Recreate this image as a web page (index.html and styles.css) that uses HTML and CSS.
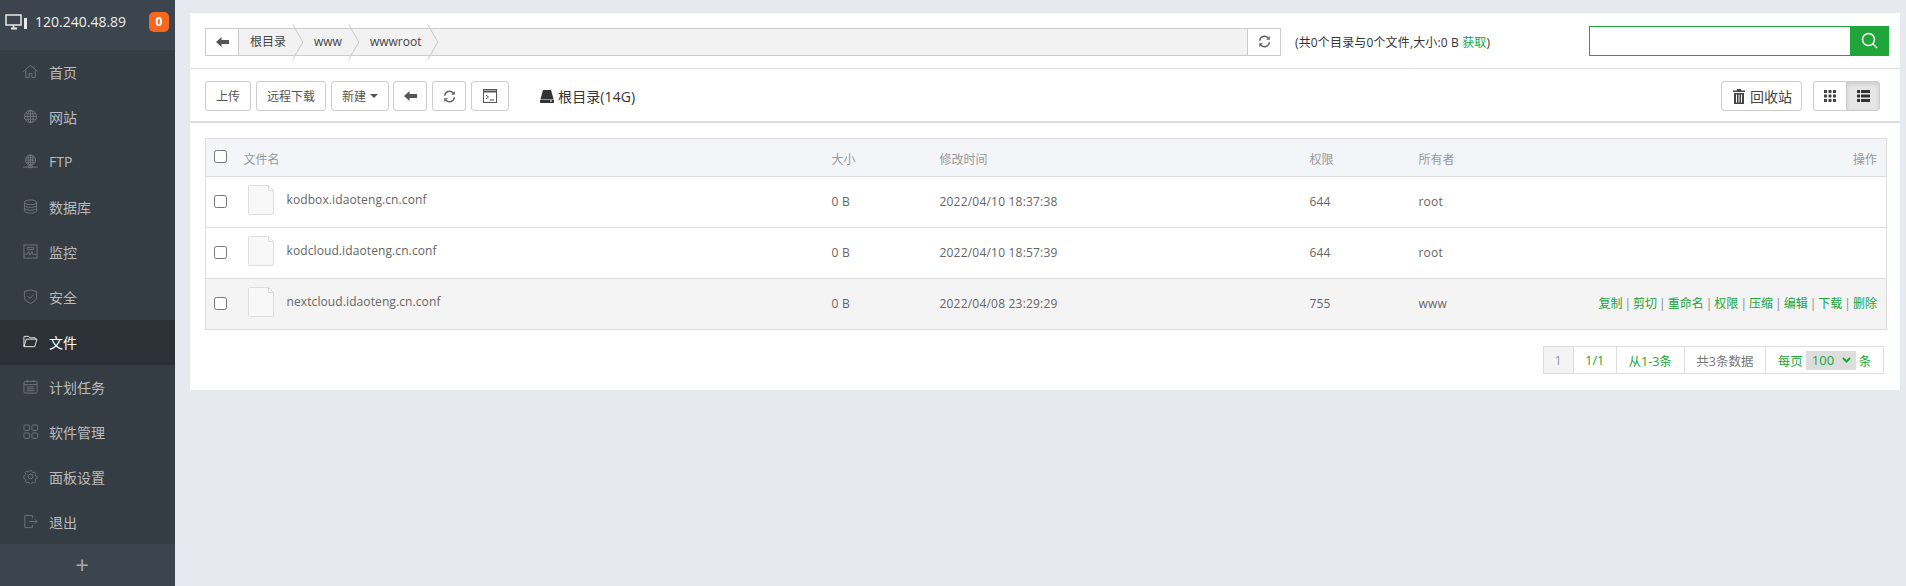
FILE: index.html
```html
<!DOCTYPE html>
<html lang="zh-CN">
<head>
<meta charset="UTF-8" />
<title>文件管理</title>
<link rel="stylesheet" href="styles.css">
</head>
<body>

<aside class="sidebar">
    <div class="host">
        <svg class="host-icon" width="23" height="16" viewBox="0 0 23 16" fill="none" stroke="#e8e8e8" stroke-width="1.5">
            <rect x="1" y="1" width="15" height="10"/>
            <path d="M6 14.500h6" stroke-width="2"/>
            <path d="M8.500 11v3"/>
            <rect x="19" y="4" width="3" height="11" fill="#e8e8e8" stroke="none"/>
        </svg>
        <span class="host-ip">120.240.48.89</span>
        <span class="host-badge">0</span>
    </div>
    <nav class="menu">
        <a class="menu-item">
            <svg viewBox="0 0 16 16"><path d="M.5 8 8 1.500 15.500 8M3 7v7.500h3.500V10h3v4.500H13V7M12 3V2"/></svg>首页
        </a>
        <a class="menu-item">
            <svg viewBox="0 0 16 16"><circle cx="8" cy="8" r="6.500"/><ellipse cx="8" cy="8" rx="3" ry="6.500"/><path d="M8 1.500v13M1.500 8h13M2.500 5h11M2.500 11h11"/></svg>网站
        </a>
        <a class="menu-item">
            <svg viewBox="0 0 16 16"><circle cx="8" cy="6.500" r="5.500"/><ellipse cx="8" cy="6.500" rx="2.500" ry="5.500"/><path d="M8 1v11M2.500 6.500h11M3.500 4h9M3.500 9h9M0 14h16M6 12.500h4v2H6z"/></svg>FTP
        </a>
        <a class="menu-item">
            <svg viewBox="0 0 16 16"><ellipse cx="8" cy="3.500" rx="6.500" ry="2.500"/><path d="M1.500 3.500v9c0 1.400 2.900 2.500 6.500 2.500s6.500-1.100 6.500-2.500v-9M1.500 6.500C1.500 7.900 4.400 9 8 9s6.500-1.100 6.500-2.500M1.500 9.500c0 1.400 2.900 2.500 6.500 2.500s6.500-1.100 6.500-2.500"/></svg>数据库
        </a>
        <a class="menu-item">
            <svg viewBox="0 0 16 16"><rect x="1" y="1" width="14" height="14"/><path d="M1 11h3.500L6 8l1.500 4L9.500 8l1 3H15M5 3.500h6V6H5z"/></svg>监控
        </a>
        <a class="menu-item">
            <svg viewBox="0 0 16 16"><path d="M8 .8c2 1 4 1.500 6.500 1.500v6.500c0 3-3 5.200-6.500 6.500-3.500-1.300-6.500-3.500-6.500-6.500V2.300C4 2.300 6 1.800 8 .8z"/><path d="m5 7.500 2.500 2.500L11.500 6"/></svg>安全
        </a>
        <a class="menu-item active">
            <svg viewBox="0 0 16 16"><path d="M1 13.500V2.500h5l1 1.500h6v1.500M1 13.500h11.500l2.500-8H3.500z"/></svg>文件
        </a>
        <a class="menu-item">
            <svg viewBox="0 0 16 16"><rect x="1" y="2.500" width="14" height="12.500" rx="1.500"/><path d="M1 6h14M4.500 1v2.500M11.500 1v2.500M4 8.500h8M4 10.500h8M4 12.500h8" /></svg>计划任务
        </a>
        <a class="menu-item">
            <svg viewBox="0 0 16 16"><rect x="1" y="1" width="6" height="6" rx="1.500"/><rect x="9.500" y="1" width="6" height="6" rx="1.500"/><rect x="1" y="9.500" width="6" height="6" rx="1.500"/><rect x="9.500" y="9.500" width="6" height="6" rx="1.500"/></svg>软件管理
        </a>
        <a class="menu-item">
            <svg viewBox="0 0 16 16"><path d="M6.700 1h2.600l.4 2 1.500.7 1.800-1 1.800 1.900-1 1.700.6 1.500 2 .5v2.500l-2 .5-.6 1.500 1 1.700-1.800 1.900-1.800-1-1.500.6-.4 2H6.700l-.4-2-1.500-.6-1.800 1-1.800-1.900 1-1.700-.6-1.500-2-.5V7.300l2-.5.600-1.500-1-1.700 1.800-1.900 1.800 1 1.500-.7z" transform="translate(1.200 .9) scale(.85)"/><circle cx="8" cy="8" r="2.500"/></svg>面板设置
        </a>
        <a class="menu-item">
            <svg viewBox="0 0 16 16"><path d="M10 4.500V1.500H2v13h8v-3M6.500 8H15M12.500 5.500 15 8l-2.500 2.500"/></svg>退出
        </a>
    </nav>
    <div class="sidebar-add">+</div>
</aside>

<main class="panel">
    <div class="path-row">
        <div class="path-bar">
            <span class="path-btn">
                <svg class="ico" width="13" height="10" viewBox="0 0 13 10"><path d="M0 5 5.500 0v3H13v4H5.500v3z" fill="#555"/></svg>
            </span>
            <div class="crumbs">
                <span class="crumb">根目录</span>
                <span class="crumb">www</span>
                <span class="crumb">wwwroot</span>
            </div>
            <span class="path-btn refresh">
                <svg class="ico" width="13" height="13" viewBox="0 0 14 14"><use href="#refresh"/></svg>
            </span>
        </div>
        <div class="path-info">(共0个目录与0个文件,大小:0 B <a class="green">获取</a>)</div>
        <div class="search">
            <input class="search-input" type="text">
            <span class="search-btn">
                <svg width="17" height="17" viewBox="0 0 17 17" fill="none" stroke="#fff" stroke-width="1.500"><circle cx="7.500" cy="7.500" r="6"/><path d="m12 12 4 4"/></svg>
            </span>
        </div>
    </div>

    <div class="tool-row">
        <button class="btn">上传</button>
        <button class="btn">远程下载</button>
        <button class="btn new-btn">新建 <i class="caret"></i></button>
        <button class="btn icon-btn">
            <svg width="13" height="10" viewBox="0 0 13 10"><path d="M0 5 5.500 0v3H13v4H5.500v3z" fill="#555"/></svg>
        </button>
        <button class="btn icon-btn">
            <svg width="13" height="13" viewBox="0 0 14 14"><use href="#refresh"/></svg>
        </button>
        <button class="btn icon-btn term">
            <svg width="14" height="14" viewBox="0 0 14 14" fill="none" stroke="#555"><rect x=".5" y=".5" width="13" height="13"/><path d="M.5 2.500h13" stroke-width="2"/><path d="m3 6 2.500 2L3 10M6.500 11H11"/></svg>
        </button>
        <span class="disk">
            <svg width="14" height="13" viewBox="0 0 14 13"><path d="M3 0h8l2.500 9h-13z" fill="#333"/><rect y="9.500" width="14" height="3.500" rx=".8" fill="#333"/><rect x="10" y="10.500" width="2" height="1" fill="#fff"/></svg>
            根目录(14G)
        </span>
        <button class="btn recycle">
            <svg width="12" height="15" viewBox="0 0 12 15"><path d="M4 0h4v1.500h4V3H0V1.500h4zM1 4h10v11H1zM3 5.500v8h1v-8zM5.500 5.500v8h1v-8zM8 5.500v8h1v-8z" fill="#444" fill-rule="evenodd"/></svg>
            回收站
        </button>
        <div class="view-group">
            <span class="view-btn">
                <svg width="12" height="12" viewBox="0 0 12 12" fill="#444"><path d="M0 0h3v3H0zM4.500 0h3v3h-3zM9 0h3v3H9zM0 4.500h3v3H0zM4.500 4.500h3v3h-3zM9 4.500h3v3H9zM0 9h3v3H0zM4.500 9h3v3h-3zM9 9h3v3H9z"/></svg>
            </span>
            <span class="view-btn on">
                <svg width="13" height="12" viewBox="0 0 13 12" fill="#333"><path d="M0 0h3v3H0zM4 0h9v3H4zM0 4.500h3v3H0zM4 4.500h9v3H4zM0 9h3v3H0zM4 9h9v3H4z"/></svg>
            </span>
        </div>
    </div>

    <div class="list-wrap">
        <table class="files">
            <thead>
                <tr>
                    <th class="col-check"><input type="checkbox"></th>
                    <th class="col-name">文件名</th>
                    <th class="col-size">大小</th>
                    <th class="col-time">修改时间</th>
                    <th class="col-perm">权限</th>
                    <th class="col-owner">所有者</th>
                    <th class="col-ops">操作</th>
                </tr>
            </thead>
            <tbody>
                <tr>
                    <td class="col-check"><input type="checkbox"></td>
                    <td class="col-name"><span class="file"><svg class="file-icon" width="26" height="30" viewBox="0 0 26 30"><use href="#file"/></svg>kodbox.idaoteng.cn.conf</span></td>
                    <td>0 B</td>
                    <td>2022/04/10 18:37:38</td>
                    <td>644</td>
                    <td>root</td>
                    <td></td>
                </tr>
                <tr>
                    <td class="col-check"><input type="checkbox"></td>
                    <td class="col-name"><span class="file"><svg class="file-icon" width="26" height="30" viewBox="0 0 26 30"><use href="#file"/></svg>kodcloud.idaoteng.cn.conf</span></td>
                    <td>0 B</td>
                    <td>2022/04/10 18:57:39</td>
                    <td>644</td>
                    <td>root</td>
                    <td></td>
                </tr>
                <tr class="hover">
                    <td class="col-check"><input type="checkbox"></td>
                    <td class="col-name"><span class="file"><svg class="file-icon" width="26" height="30" viewBox="0 0 26 30"><use href="#file"/></svg>nextcloud.idaoteng.cn.conf</span></td>
                    <td>0 B</td>
                    <td>2022/04/08 23:29:29</td>
                    <td>755</td>
                    <td>www</td>
                    <td class="col-ops ops">
                        <a>复制</a> | <a>剪切</a> | <a>重命名</a> | <a>权限</a> | <a>压缩</a> | <a>编辑</a> | <a>下载</a> | <a>删除</a>
                    </td>
                </tr>
            </tbody>
        </table>

        <div class="pager">
            <span class="page cur">1</span>
            <span class="page green">1/1</span>
            <span class="page green">从1-3条</span>
            <span class="page muted">共3条数据</span>
            <span class="page green">每页
                <select class="page-size"><option>100</option></select>
                条</span>
        </div>
    </div>
</main>

<svg class="defs" width="0" height="0">
    <symbol id="refresh" viewBox="0 0 14 14">
        <path d="M1.800 6.200A5.200 5.200 0 0 1 11 3.300" fill="none" stroke="#666" stroke-width="1.600"/>
        <path d="M12.700 1v4H8.700z" fill="#666"/>
        <path d="M12.200 7.800A5.200 5.200 0 0 1 3 10.700" fill="none" stroke="#666" stroke-width="1.600"/>
        <path d="M1.300 13V9h4z" fill="#666"/>
    </symbol>
    <symbol id="file" viewBox="0 0 26 30">
        <path d="M1.500.5h19l5 5v23a1 1 0 0 1-1 1h-23a1 1 0 0 1-1-1v-27a1 1 0 0 1 1-1z" fill="#f8f8f8" stroke="#ddd"/>
        <path d="M20.500.5v5h5" fill="none" stroke="#ddd"/>
    </symbol>
</svg>

</body>
</html>
```

FILE: styles.css
```css
* {
    box-sizing: border-box;
}
html, body {
    height: 100%;
}
body {
    margin: 0;
    display: flex;
    align-items: flex-start;
    background-color: #e6e9ee;
    font-family: "Open Sans", "Noto Sans CJK SC", sans-serif;
    font-size: 12px;
    color: #666;
    overflow: hidden;
}
.green {
    color: #20a53a;
}
.defs {
    position: absolute;
}

/* sidebar */
.sidebar {
    width: 175px;
    height: 586px;
    flex-shrink: 0;
    display: flex;
    flex-direction: column;
    background-color: #353d44;
}
.host {
    height: 50px;
    display: flex;
    align-items: center;
    padding: 0 6px 7px 5px;
    background-color: #3c444d;
    color: #fff;
    font-size: 14px;
}
.host-icon {
    margin-right: 7px;
}
.host-ip {
    flex: 1;
    color: #eee;
}
.host-badge {
    width: 20px;
    height: 20px;
    border-radius: 5px;
    background-color: #f7681e;
    color: #fff;
    font-size: 12px;
    font-weight: 700;
    line-height: 20px;
    text-align: center;
}
.menu-item {
    height: 45px;
    display: flex;
    align-items: center;
    padding: 0 0 2px 23px;
    color: #bbb;
    font-size: 14px;
}
.menu-item svg {
    width: 15px;
    height: 15px;
    margin-right: 11px;
    fill: none;
    stroke: #6f767c;
    stroke-width: 1;
}
.menu-item.active {
    background-color: #2c3138;
    color: #fff;
}
.menu-item.active svg {
    stroke: #eee;
}
.sidebar-add {
    flex: 1;
    margin-top: -1px;
    padding: 0 11px 2px 0;
    display: flex;
    align-items: center;
    justify-content: center;
    background-color: #3c444d;
    color: #aaa;
    font-size: 24px;
}

/* main panel */
.panel {
    width: 1710px;
    height: 377px;
    margin: 13px 0 0 15px;
    background-color: #fff;
}
.path-row {
    height: 56px;
    display: flex;
    align-items: center;
    padding: 0 11px 0 15px;
    border-bottom: 1px solid #ddd;
}
.path-bar {
    width: 1076px;
    height: 28px;
    margin-top: 2px;
    display: flex;
    border: 1px solid #ccc;
    background-color: #f2f2f2;
}
.path-btn {
    width: 33px;
    display: flex;
    align-items: center;
    justify-content: center;
    background-color: #fff;
    border-right: 1px solid #ccc;
}
.path-btn.refresh {
    border-right: none;
    border-left: 1px solid #ccc;
}
.crumbs {
    flex: 1;
    display: flex;
    color: #444;
}
.crumb {
    position: relative;
    padding: 0 17px 0 11px;
    line-height: 26px;
}
.crumb::after {
    content: "";
    position: absolute;
    top: 3px;
    right: 0;
    width: 19px;
    height: 19px;
    border-top: 1px solid #ccc;
    border-right: 1px solid #ccc;
    transform: rotate(45deg) skew(15deg, 15deg);
}
.path-info {
    flex: 1;
    margin: 2px 0 0 14px;
    color: #333;
    font-size: 12px;
    letter-spacing: .15px;
}
.search {
    width: 300px;
    height: 30px;
    display: flex;
}
.search-input {
    flex: 1;
    min-width: 0;
    border: 1px solid #20a53a;
    border-right: none;
    outline: none;
}
.search-btn {
    width: 39px;
    display: flex;
    align-items: center;
    justify-content: center;
    background-color: #20a53a;
}
.tool-row {
    height: 54px;
    display: flex;
    align-items: center;
    gap: 5px;
    padding: 2px 20px 0 15px;
    border-bottom: 2px solid #ddd;
}
.btn {
    height: 30px;
    padding: 0 10px;
    display: inline-flex;
    align-items: center;
    gap: 4px;
    background-color: #fff;
    border: 1px solid #ccc;
    border-radius: 3px;
    color: #555;
    font-family: inherit;
    font-size: 12px;
}
.new-btn {
    width: 58px;
    margin-right: -1px;
}
.icon-btn {
    width: 34px;
    padding: 0;
    justify-content: center;
}
.term {
    width: 38px;
}
.caret {
    width: 0;
    height: 0;
    border-top: 4px solid #555;
    border-left: 4px solid transparent;
    border-right: 4px solid transparent;
}
.disk {
    flex: 1;
    display: flex;
    align-items: center;
    gap: 4px;
    margin-left: 26px;
    color: #333;
    font-size: 14px;
    letter-spacing: .1px;
}
.recycle {
    width: 81px;
    padding: 0 0 0 11px;
    gap: 5px;
    color: #444;
    font-size: 14px;
}
.view-group {
    width: 67px;
    height: 30px;
    margin-left: 6px;
    display: flex;
    border: 1px solid #ccc;
    border-radius: 3px;
    overflow: hidden;
}
.view-btn {
    flex: 1;
    display: flex;
    align-items: center;
    justify-content: center;
}
.view-btn.on {
    background-color: #e6e6e6;
    box-shadow: inset 0 2px 4px rgba(0, 0, 0, .12);
    border-left: 1px solid #ccc;
}

/* file list */
.list-wrap {
    padding: 15px 13px 0 15px;
}
.files {
    width: 100%;
    border-collapse: collapse;
    table-layout: fixed;
    border: 1px solid #ddd;
}
.files th {
    height: 38px;
    background-color: #f3f5f9;
    color: #999;
    font-weight: 400;
    text-align: left;
    padding: 3px 0 0;
}
.files td {
    height: 51px;
    padding: 0 0 2px;
    border-top: 1px solid #ddd;
    color: #666;
    letter-spacing: .2px;
}
.files input[type="checkbox"] {
    width: 13px;
    height: 13px;
    margin: 0 0 2px;
    vertical-align: middle;
}
.files th input[type="checkbox"] {
    margin-bottom: 5px;
}
.col-check {
    width: 38px;
    padding-left: 8px !important;
}
.col-name {
    width: 588px;
}
.col-size {
    width: 108px;
}
.col-time {
    width: 370px;
}
.col-perm {
    width: 109px;
}
.col-owner {
    width: 120px;
}
.files .col-ops {
    text-align: right;
    padding-right: 9px;
}
.file {
    display: flex;
    align-items: center;
    gap: 13px;
    margin: -3px 0 0 4px;
    letter-spacing: .1px;
}
.hover td {
    background-color: #f4f4f4;
}
.files .ops {
    color: #888;
    white-space: nowrap;
    letter-spacing: 0;
    word-spacing: -1.1px;
}
.ops a {
    color: #20a53a;
}
.pager {
    display: flex;
    justify-content: flex-end;
    margin: 16px 3px 0 0;
    height: 28px;
    font-size: 12.5px;
}
.page {
    display: flex;
    align-items: center;
    gap: 3px;
    padding: 0 11.700px;
    border: 1px solid #ddd;
    border-left: none;
}
.page:first-child {
    border-left: 1px solid #ddd;
}
.page.cur {
    width: 31px;
    justify-content: center;
    padding: 0;
    background-color: #f3f3f3;
    color: #999;
}
.page.muted {
    color: #777;
}
.page-size {
    appearance: none;
    width: 50px;
    height: 19px;
    border: none;
    background: #ddd url("data:image/svg+xml,%3Csvg xmlns='http://www.w3.org/2000/svg' width='9' height='6'%3E%3Cpath d='M1 1l3.500 3.500L8 1' fill='none' stroke='%2320a53a' stroke-width='2'/%3E%3C/svg%3E") no-repeat right 5px center;
    color: #20a53a;
    font-family: inherit;
    font-size: 13px;
    padding-left: 6px;
}
```
